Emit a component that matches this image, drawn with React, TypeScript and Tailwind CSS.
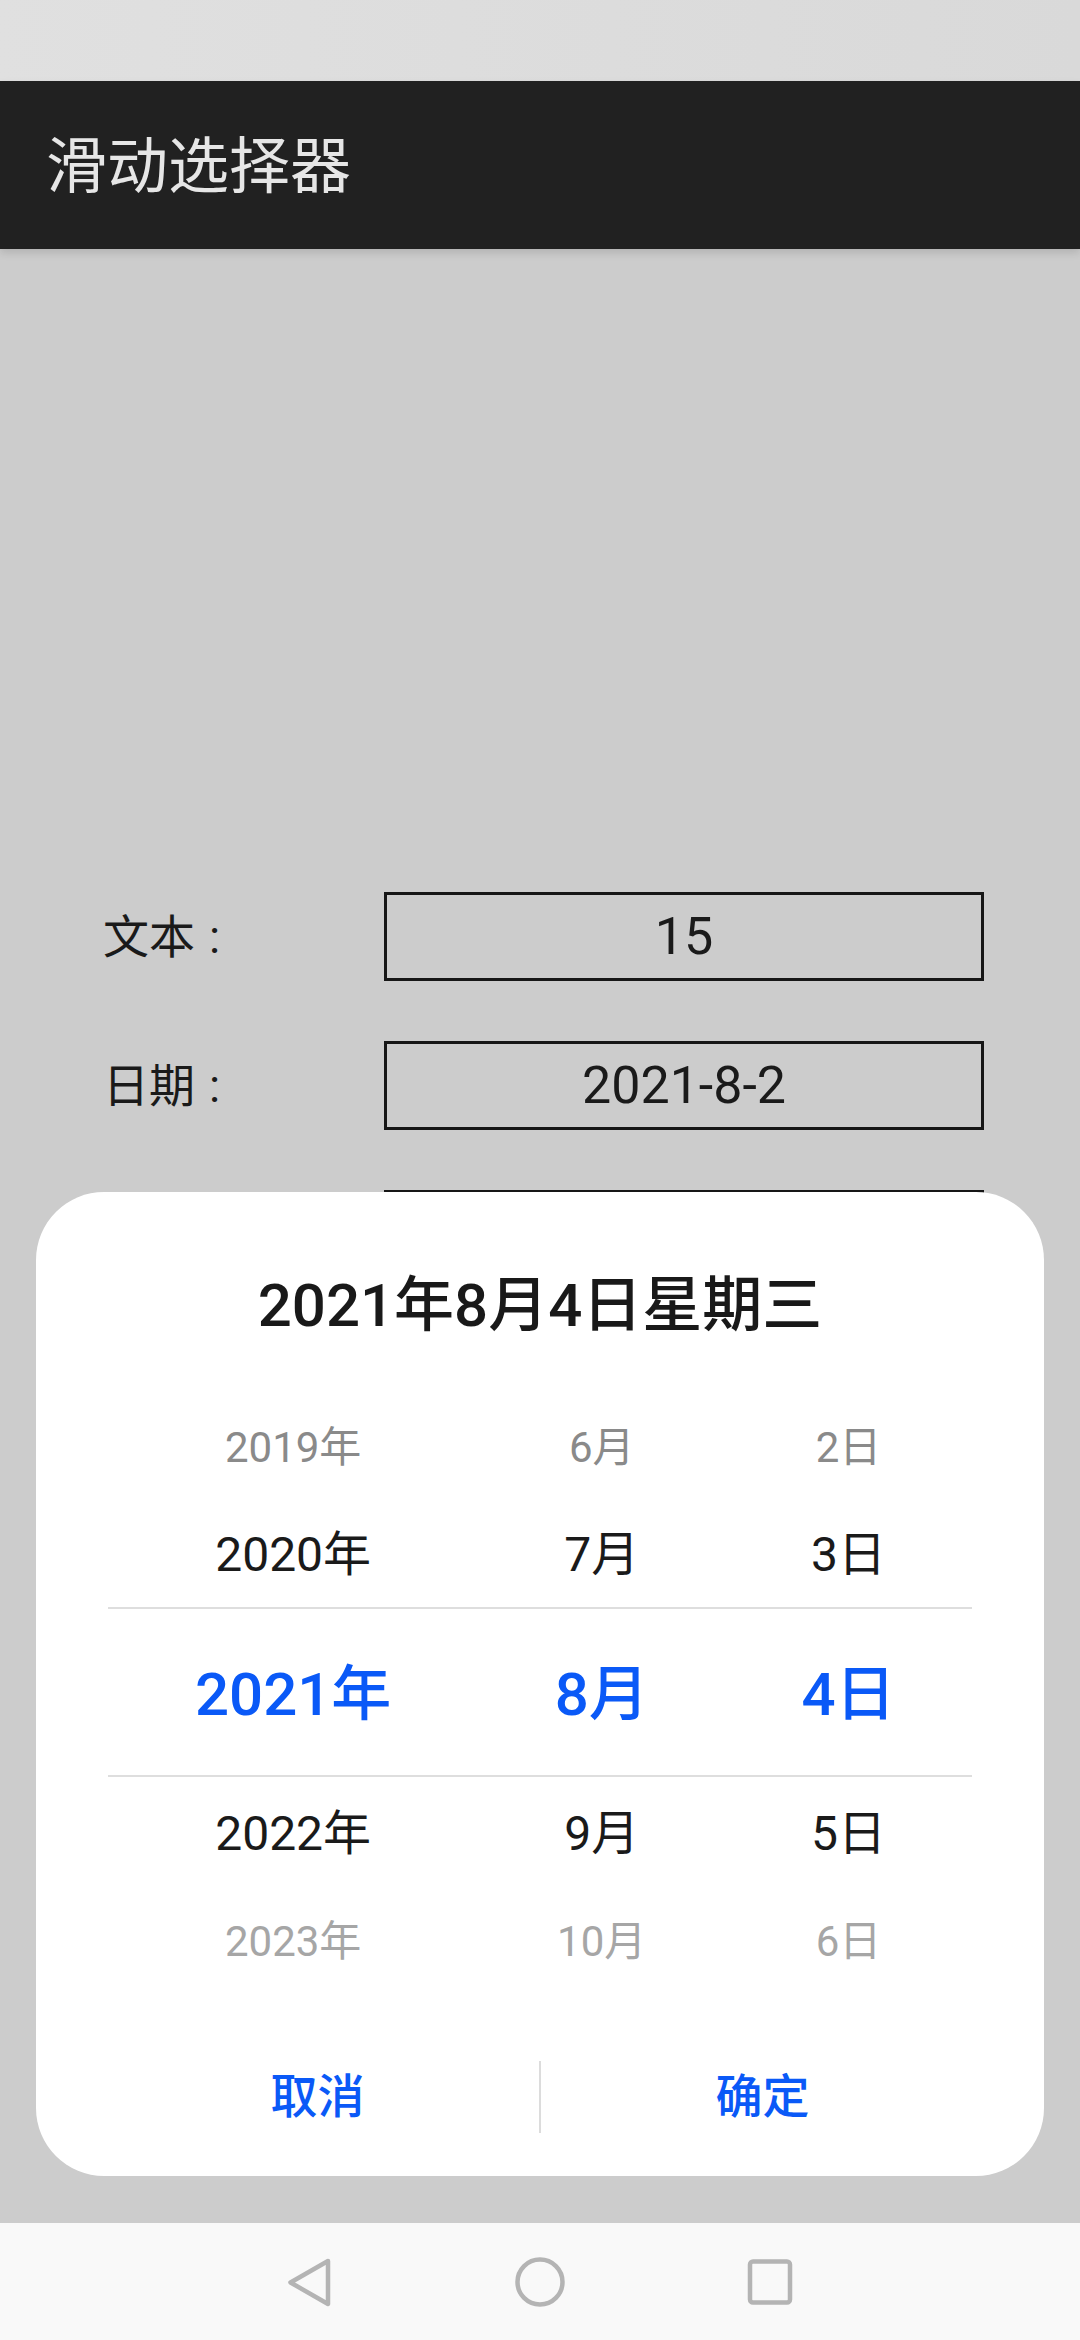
import React from 'react';

const years = ['2019年', '2020年', '2021年', '2022年', '2023年'];
const months = ['6月', '7月', '8月', '9月', '10月'];
const days = ['2日', '3日', '4日', '5日', '6日'];

// row height, text size, colour per wheel position
const rowStyles = [
  'h-[110px] text-[42px] text-[#8a8a8a]',
  'h-[105px] text-[48px] text-[#1a1a1a]',
  'h-[170px] pt-[6px] text-[60px] font-medium text-[#0a59f7] border-y-2 border-[#dedede]',
  'h-[114px] text-[48px] text-[#1a1a1a]',
  'h-[100px] text-[42px] text-[#a6a6a6]',
];

function FormRow({ label, value }: { label: string; value?: string }) {
  return (
    <div className="flex items-center pl-[103px]">
      <div className="w-[281px] text-[46px] text-[#1a1a1a] leading-none">
        {label}
        <span className="ml-[14px]">:</span>
      </div>
      <div className="w-[600px] h-[89px] border-[3px] border-[#161616] flex items-center justify-center text-[52px] text-[#1a1a1a]">
        {value}
      </div>
    </div>
  );
}

function NavIcons() {
  return (
    <div className="h-[117px] bg-[#f9f9f9] flex items-center justify-center gap-[180px]">
      <svg width="50" height="50" viewBox="0 0 50 50" fill="none" stroke="#b4b4b4" strokeWidth="4.5" strokeLinejoin="round">
        <path d="M43 4 L5.5 25.5 L43 47 Z" />
      </svg>
      <svg width="50" height="50" viewBox="0 0 50 50" fill="none" stroke="#b4b4b4" strokeWidth="4.5">
        <circle cx="25" cy="25" r="22.5" />
      </svg>
      <svg width="50" height="50" viewBox="0 0 50 50" fill="none" stroke="#b4b4b4" strokeWidth="4.5">
        <rect x="5" y="4.5" width="40" height="41" rx="3" />
      </svg>
    </div>
  );
}

export default function App() {
  return (
    <div className="w-[1080px] h-[2340px] flex flex-col font-['Roboto','Noto_Sans_CJK_SC',sans-serif] overflow-hidden">
      {/* status bar */}
      <div className="h-[81px] bg-gradient-to-r from-[#e0e0e0] to-[#d9d9d9]" />

      {/* app bar */}
      <div className="h-[168px] bg-[#212121] flex items-center pl-[46px] pt-[4px] shadow-[0_4px_8px_rgba(0,0,0,0.12)] relative z-10">
        <span className="text-[61px] text-[#e6e6e6] leading-none">滑动选择器</span>
      </div>

      {/* content */}
      <div className="relative flex-1 bg-[#cccccc]">
        <div className="flex flex-col gap-[60px] pt-[643px]">
          <FormRow label="文本" value="15" />
          <FormRow label="日期" value="2021-8-2" />
          <FormRow label="时间" value="" />
        </div>

        {/* date picker dialog */}
        <div className="absolute left-[36px] right-[36px] bottom-[47px] h-[984px] bg-white rounded-[68px] flex flex-col">
          <div className="pt-[78px] h-[150px] text-center text-[60px] leading-[72px] font-medium text-[#191919]">
            2021年8月4日星期三
          </div>
          <div className="mt-[50px] px-[72px] flex flex-col">
            {rowStyles.map((style, i) => (
              <div key={i} className={`grid grid-cols-[3fr_2fr_2fr] items-center text-center ${style}`}>
                <span>{years[i]}</span>
                <span>{months[i]}</span>
                <span>{days[i]}</span>
              </div>
            ))}
          </div>
          <div className="mt-[50px] h-[112px] px-[60px] flex items-center text-[47px] font-medium text-[#0a59f7]">
            <div className="flex-1 text-center">取消</div>
            <div className="w-[2px] h-[72px] bg-[#dcdcdc]" />
            <div className="flex-1 text-center">确定</div>
          </div>
        </div>
      </div>

      <NavIcons />
    </div>
  );
}
